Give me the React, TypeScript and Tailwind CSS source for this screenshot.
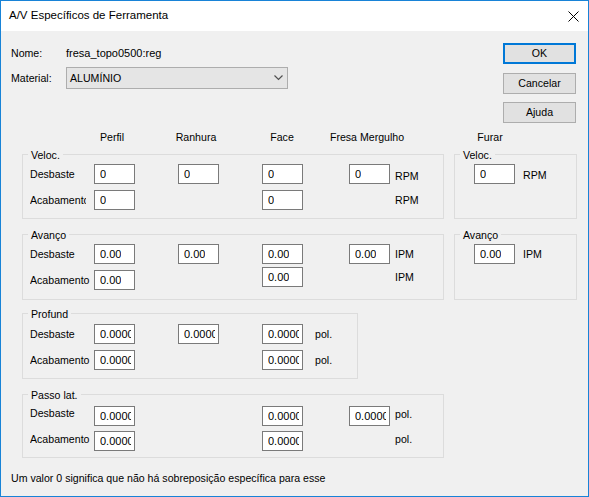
import type { ReactNode } from 'react';

type Cells = { p?: string; r?: string; f?: string; m?: string };

function Field({ value, className = '' }: { value: string; className?: string }) {
  return (
    <div className={`flex h-[20px] w-[41px] items-center border border-[#7a7a7a] bg-white pl-[5px] pr-[3px] text-[11px] ${className}`}>
      <div className="overflow-hidden whitespace-nowrap leading-[13px]">{value}</div>
    </div>
  );
}

function Group({ title, className = '', children }: { title: string; className?: string; children: ReactNode }) {
  return (
    <div className={`relative border border-[#dcdcdc] ${className}`}>
      <span className="absolute -top-[6px] left-[5px] bg-[#f0f0f0] px-[3px] leading-[13px]">{title}</span>
      {children}
    </div>
  );
}

function Row({
  label,
  cells,
  unit,
  unitCol = 'm',
  labelClass = '',
  unitClass = '',
  faceClass = '',
  className = '',
}: {
  label: string;
  cells: Cells;
  unit: string;
  unitCol?: 'm' | 'f';
  labelClass?: string;
  unitClass?: string;
  faceClass?: string;
  className?: string;
}) {
  return (
    <div className={`grid h-[20px] grid-cols-[64px_41px_43px_41px_43px_41px_46px_41px_auto] items-center pl-[7px] ${className}`}>
      <div className={`col-start-1 row-start-1 overflow-hidden whitespace-nowrap leading-[13px] ${labelClass}`}>{label}</div>
      {cells.p && <Field value={cells.p} className="col-start-2 row-start-1" />}
      {cells.r && <Field value={cells.r} className="col-start-4 row-start-1" />}
      {cells.f && <Field value={cells.f} className={`col-start-6 row-start-1 ${faceClass}`} />}
      {cells.m && <Field value={cells.m} className="col-start-8 row-start-1" />}
      <div
        className={`row-start-1 leading-[13px] ${unitCol === 'm' ? 'col-start-9 pl-[5px]' : 'col-start-7 pl-[12px]'} ${unitClass}`}
      >
        {unit}
      </div>
    </div>
  );
}

function Button({ label, primary = false }: { label: string; primary?: boolean }) {
  return (
    <div
      className={`flex h-[21px] w-[73px] items-center justify-center bg-[#e1e1e1] leading-[13px] ${
        primary ? 'border-2 border-[#0078d7]' : 'border border-[#adadad]'
      }`}
    >
      {label}
    </div>
  );
}

export default function App() {
  return (
    <div className="h-[497px] w-[589px] border border-[#1883d7] bg-[#f0f0f0] font-['Liberation_Sans',Arial,sans-serif] text-[10.6px] text-black">
      {/* title bar */}
      <div className="flex h-[30px] items-center justify-between bg-white pl-[8px] pr-[10px]">
        <span className="font-['Liberation_Sans',Arial,sans-serif] text-[11.5px]">A/V Específicos de Ferramenta</span>
        <svg width="11" height="11" viewBox="0 0 11 11" className="mr-[-1px]">
          <path d="M0.5 0.5 L10.5 10.5 M10.5 0.5 L0.5 10.5" stroke="#000" strokeWidth="1" />
        </svg>
      </div>

      <div className="flex flex-col pt-[12px]">
        {/* nome / material + buttons */}
        <div className="flex justify-between pr-[12px]">
          <div className="flex flex-col pl-[10px] pt-[4px]">
            <div className="flex h-[13px] items-center leading-[13px]">
              <span className="w-[55px]">Nome:</span>
              <span className="text-[11px]">fresa_topo0500:reg</span>
            </div>
            <div className="mt-[7px] flex items-center">
              <span className="w-[55px] leading-[13px]">Material:</span>
              <div className="flex h-[22px] w-[222px] items-center justify-between border border-[#adadad] bg-[#e5e5e5] pl-[3px] pr-[4px]">
                <span className="leading-[13px]">ALUMÍNIO</span>
                <svg width="9" height="6" viewBox="0 0 9 6">
                  <path d="M0.5 0.5 L4.5 4.5 L8.5 0.5" fill="none" stroke="#505050" strokeWidth="1.2" />
                </svg>
              </div>
            </div>
          </div>
          <div className="flex flex-col">
            <Button label="OK" primary />
            <div className="mt-[9px]">
              <Button label="Cancelar" />
            </div>
            <div className="mt-[8px]">
              <Button label="Ajuda" />
            </div>
          </div>
        </div>

        {/* column headers */}
        <div className="mt-[8px] flex h-[13px] leading-[13px]">
          <span className="ml-[71px] w-[80px] text-center">Perfil</span>
          <span className="ml-[4px] w-[80px] text-center">Ranhura</span>
          <span className="ml-[6px] w-[80px] text-center">Face</span>
          <span className="ml-[5px] w-[80px] text-center">Fresa Mergulho</span>
          <span className="ml-[43px] w-[80px] text-center">Furar</span>
        </div>

        {/* groups */}
        <div className="mt-[10px] flex">
          <div className="ml-[21px] flex w-[422px] flex-col">
            <Group title="Veloc." className="h-[65px] pt-[9px]">
              <Row label="Desbaste" cells={{ p: '0', r: '0', f: '0', m: '0' }} unit="RPM" unitClass="translate-y-[2px]" />
              <Row
                label="Acabamento"
                labelClass="w-[56px]"
                cells={{ p: '0', f: '0' }}
                unit="RPM"
                className="mt-[6px]"
              />
            </Group>

            <Group title="Avanço" className="mt-[15px] h-[66px] pt-[9px]">
              <Row label="Desbaste" cells={{ p: '0.00', r: '0.00', f: '0.00', m: '0.00' }} unit="IPM" />
              <Row
                label="Acabamento"
                cells={{ p: '0.00', f: '0.00' }}
                unit="IPM"
                faceClass="-translate-y-[3px]"
                unitClass="-translate-y-[3px]"
                className="mt-[6px]"
              />
            </Group>

            <Group title="Profund" className="mt-[13px] h-[66px] w-[336px] pt-[10px]">
              <Row label="Desbaste" cells={{ p: '0.0000', r: '0.0000', f: '0.0000' }} unit="pol." unitCol="f" />
              <Row
                label="Acabamento"
                cells={{ p: '0.0000', f: '0.0000' }}
                unit="pol."
                unitCol="f"
                className="mt-[6px]"
              />
            </Group>

            <Group title="Passo lat." className="mt-[15px] h-[64px] pt-[11px]">
              <Row
                label="Desbaste"
                cells={{ p: '0.0000', f: '0.0000', m: '0.0000' }}
                unit="pol."
                labelClass="-translate-y-[3px]"
                unitClass="-translate-y-[2px]"
              />
              <Row
                label="Acabamento"
                cells={{ p: '0.0000', f: '0.0000' }}
                unit="pol."
                labelClass="-translate-y-[2px]"
                unitClass="-translate-y-[2px]"
                className="mt-[5px]"
              />
            </Group>
          </div>

          <div className="ml-[10px] flex w-[123px] flex-col">
            <Group title="Veloc." className="h-[65px] pl-[19px] pt-[9px]">
              <div className="flex items-center">
                <Field value="0" />
                <span className="ml-[8px] translate-y-[1px] leading-[13px]">RPM</span>
              </div>
            </Group>
            <Group title="Avanço" className="mt-[15px] h-[66px] pl-[19px] pt-[9px]">
              <div className="flex items-center">
                <Field value="0.00" />
                <span className="ml-[8px] leading-[13px]">IPM</span>
              </div>
            </Group>
          </div>
        </div>

        {/* footer */}
        <div className="mt-[14px] pl-[10px] leading-[13px]">
          Um valor 0 significa que não há sobreposição específica para esse
        </div>
      </div>
    </div>
  );
}
